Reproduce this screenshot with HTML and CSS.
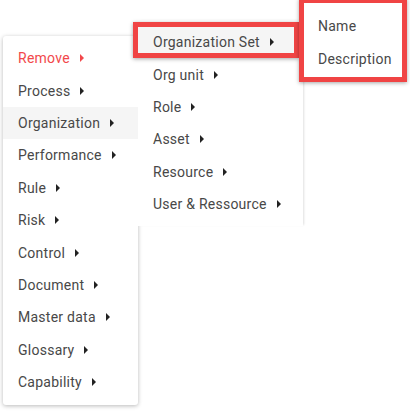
FILE: index.html
```html
<!DOCTYPE html>
<html>
<head>
<meta charset="utf-8">
<link rel="stylesheet" href="styles.css">
</head>
<body>
<div class="stage">
  <ul class="menu menu-main">
    <li class="item danger">Remove<span class="caret"></span></li>
    <li class="item">Process<span class="caret"></span></li>
    <li class="item active">Organization<span class="caret"></span></li>
    <li class="item">Performance<span class="caret"></span></li>
    <li class="item">Rule<span class="caret"></span></li>
    <li class="item">Risk<span class="caret"></span></li>
    <li class="item">Control<span class="caret"></span></li>
    <li class="item">Document<span class="caret"></span></li>
    <li class="item">Master data<span class="caret"></span></li>
    <li class="item">Glossary<span class="caret"></span></li>
    <li class="item">Capability<span class="caret"></span></li>
  </ul>
  <ul class="menu menu-sub">
    <li class="item active">Organization Set<span class="caret"></span></li>
    <li class="item">Org unit<span class="caret"></span></li>
    <li class="item">Role<span class="caret"></span></li>
    <li class="item">Asset<span class="caret"></span></li>
    <li class="item">Resource<span class="caret"></span></li>
    <li class="item">User &amp; Ressource<span class="caret"></span></li>
  </ul>
  <ul class="menu menu-leaf">
    <li class="item">Name</li>
    <li class="item">Description</li>
  </ul>
  <div class="mark mark-set"></div>
  <div class="mark mark-leaf"></div>
</div>
</body>
</html>
```

FILE: styles.css
```css
html, body {
  margin: 0;
  padding: 0;
  background: #ffffff;
}
.stage {
  position: relative;
  width: 410px;
  height: 411px;
  overflow: hidden;
  font-family: Roboto, "Liberation Sans", sans-serif;
  font-size: 14px;
  letter-spacing: 0.25px;
  color: #484848;
}
.menu {
  list-style: none;
  margin: 0;
  position: absolute;
  background: #ffffff;
  box-sizing: border-box;
}
.menu-main {
  left: 3px;
  top: 36px;
  width: 135px;
  padding: 6px 0 7px;
  border-radius: 3px;
  box-shadow: 0 1px 4px rgba(0, 0, 0, 0.28);
  z-index: 1;
}
.menu-sub {
  left: 138px;
  top: 20px;
  width: 165px;
  padding: 6px 0;
  box-shadow: 2px 0 2px -1px rgba(0, 0, 0, 0.12);
  z-index: 2;
}
.menu-leaf {
  left: 303px;
  top: 4px;
  width: 104px;
  padding: 6px 0 7px;
  z-index: 3;
}
.item {
  display: flex;
  align-items: center;
  height: 32.4px;
  padding-left: 15px;
  white-space: nowrap;
}
.item.active {
  background: #f5f5f5;
}
.item.danger {
  color: #f2484b;
}
.caret {
  width: 0;
  height: 0;
  margin-left: 10px;
  border-left: 4px solid #222222;
  border-top: 4.5px solid transparent;
  border-bottom: 4.5px solid transparent;
}
.item.danger .caret {
  border-left-color: #f2484b;
}
.mark {
  position: absolute;
  box-sizing: border-box;
  border: 5px solid #f04444;
  box-shadow: 0 1px 4px rgba(0, 0, 0, 0.35);
  z-index: 5;
}
.mark-set {
  left: 133px;
  top: 22px;
  width: 166px;
  height: 36px;
}
.mark-leaf {
  left: 299px;
  top: -2px;
  width: 108px;
  height: 84px;
}
```
